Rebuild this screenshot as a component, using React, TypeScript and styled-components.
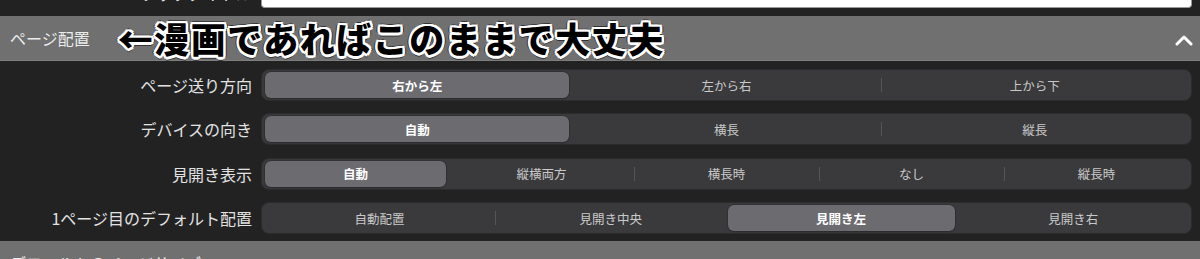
import React from 'react';
import styled, { createGlobalStyle } from 'styled-components';

const GlobalStyle = createGlobalStyle`
  html, body {
    margin: 0;
    padding: 0;
    background: #222222;
  }
  body {
    font-family: "Noto Sans CJK JP", "Noto Sans", sans-serif;
    color: #e0e0e0;
    -webkit-font-smoothing: antialiased;
  }
`;

type Option = { label: string; selected?: boolean };
type Setting = { title: string; options: Option[] };

const settings: Setting[] = [
  {
    title: 'ページ送り方向',
    options: [{ label: '右から左', selected: true }, { label: '左から右' }, { label: '上から下' }],
  },
  {
    title: 'デバイスの向き',
    options: [{ label: '自動', selected: true }, { label: '横長' }, { label: '縦長' }],
  },
  {
    title: '見開き表示',
    options: [
      { label: '自動', selected: true },
      { label: '縦横両方' },
      { label: '横長時' },
      { label: 'なし' },
      { label: '縦長時' },
    ],
  },
  {
    title: '1ページ目のデフォルト配置',
    options: [
      { label: '自動配置' },
      { label: '見開き中央' },
      { label: '見開き左', selected: true },
      { label: '見開き右' },
    ],
  },
];

const Page = styled.div`
  width: 1200px;
  height: 259px;
  overflow: hidden;
  background: #222222;
`;

const TopClip = styled.div`
  height: 16px;
  overflow: hidden;
  display: flex;
  flex-direction: column;
  justify-content: flex-end;
`;

const Row = styled.div<{ $pb?: number }>`
  display: flex;
  align-items: center;
  height: 32px;
  padding-bottom: ${({ $pb }) => $pb ?? 0}px;
`;

const Label = styled.div`
  width: 252px;
  flex-shrink: 0;
  text-align: right;
  font-size: 16px;
  color: #e2e2e2;
  white-space: nowrap;
  padding-right: 9px;
`;

const TextInput = styled.div`
  width: 931px;
  height: 30px;
  background: #ffffff;
  border: 1px solid #9a9a9a;
  border-top: none;
  border-radius: 0 0 4px 4px;
  box-sizing: border-box;
`;

const SectionHeader = styled.div`
  display: flex;
  align-items: center;
  height: 45px;
  padding: 0 7px 0 10px;
  background: #707070;
  border-bottom: 1px solid #7e7e7e;
  box-sizing: border-box;
`;

const SectionTitle = styled.div`
  font-size: 16px;
  color: #ececec;
  white-space: nowrap;
`;

const Annotation = styled.div`
  margin-left: 28px;
  margin-top: -2px;
  font-size: 35px;
  font-weight: 900;
  color: #000;
  letter-spacing: 1.5px;
  white-space: nowrap;
  text-shadow:
    2.5px 0 0 #fff, -2.5px 0 0 #fff, 0 2.5px 0 #fff, 0 -2.5px 0 #fff,
    1.8px 1.8px 0 #fff, -1.8px 1.8px 0 #fff, 1.8px -1.8px 0 #fff, -1.8px -1.8px 0 #fff,
    3.5px 0 0 #333, -3.5px 0 0 #333, 0 3.5px 0 #333, 0 -3.5px 0 #333;
`;

const Spacer = styled.div`
  flex: 1;
`;

const Chevron = styled.svg`
  width: 18px;
  height: 12px;
  margin-top: 3px;
`;

const Rows = styled.div`
  display: flex;
  flex-direction: column;
  gap: 12.4px;
  padding: 8px 0 7px;
`;

const Segmented = styled.div`
  display: flex;
  width: 931px;
  height: 32px;
  padding: 2px;
  box-sizing: border-box;
  background: #3a3a3c;
  border: 1px solid #2c2c2e;
  border-radius: 8px;
`;

const Segment = styled.div<{ $divider?: boolean }>`
  position: relative;
  flex: 1 1 0;
  min-width: 0;
  display: flex;

  &::before {
    content: '';
    display: ${({ $divider }) => ($divider ? 'block' : 'none')};
    position: absolute;
    left: 0;
    top: 6px;
    bottom: 6px;
    width: 1px;
    background: #555558;
  }
`;

const SegmentFace = styled.div<{ $selected?: boolean }>`
  flex: 1;
  display: flex;
  align-items: center;
  justify-content: center;
  font-size: 12.5px;
  border-radius: 6px;
  margin: ${({ $selected }) => ($selected ? '0 3px 0 1px' : '0')};
  color: ${({ $selected }) => ($selected ? '#ffffff' : '#c9c9c9')};
  font-weight: ${({ $selected }) => ($selected ? 700 : 400)};
  background: ${({ $selected }) => ($selected ? '#6c6b70' : 'transparent')};
  box-shadow: ${({ $selected }) => ($selected ? '0 0 0 0.5px #2a2a2c, 0 1px 2px rgba(0,0,0,0.25)' : 'none')};
`;

const SegmentedControl = ({ options }: { options: Option[] }) => (
  <Segmented>
    {options.map((o, i) => {
      const prev = options[i - 1];
      const divider = i > 0 && !o.selected && !prev?.selected;
      return (
        <Segment key={o.label} $divider={divider}>
          <SegmentFace $selected={o.selected}>{o.label}</SegmentFace>
        </Segment>
      );
    })}
  </Segmented>
);

export default function App() {
  return (
    <Page>
      <GlobalStyle />
      <TopClip>
        <Row $pb={8}>
          <Label>ブックタイトル</Label>
          <TextInput />
        </Row>
      </TopClip>

      <SectionHeader>
        <SectionTitle>ページ配置</SectionTitle>
        <Annotation>←漫画であればこのままで大丈夫</Annotation>
        <Spacer />
        <Chevron viewBox="0 0 18 12">
          <polyline
            points="2,10 9,3 16,10"
            fill="none"
            stroke="#ffffff"
            strokeWidth="3"
            strokeLinecap="round"
            strokeLinejoin="round"
          />
        </Chevron>
      </SectionHeader>

      <Rows>
        {settings.map((s) => (
          <Row key={s.title}>
            <Label>{s.title}</Label>
            <SegmentedControl options={s.options} />
          </Row>
        ))}
      </Rows>

      <SectionHeader>
        <SectionTitle>デフォルトのページサイズ</SectionTitle>
      </SectionHeader>
    </Page>
  );
}
